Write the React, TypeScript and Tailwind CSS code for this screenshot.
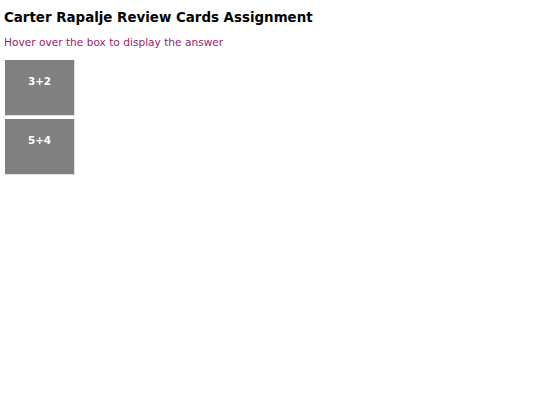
import { useState } from 'react';

const cards = [
  { question: '3+2', answer: '5' },
  { question: '5+4', answer: '9' },
];

function ReviewCard({ question, answer }: { question: string; answer: string }) {
  const [hovered, setHovered] = useState(false);
  return (
    <div
      onMouseEnter={() => setHovered(true)}
      onMouseLeave={() => setHovered(false)}
      className="w-[70px] h-[56px] bg-[#808080] border-r border-b border-[#e0e0e0] flex justify-center pt-[16px] text-white font-bold text-[10.4px] leading-[10px]"
    >
      {hovered ? answer : question}
    </div>
  );
}

export default function App() {
  return (
    <div className="min-h-screen bg-white px-[4px] pt-[10px] font-['DejaVu_Sans',Verdana,sans-serif]">
      <h1 className="text-[13.4px] font-bold text-black leading-[16px]">Carter Rapalje Review Cards Assignment</h1>
      <p className="mt-[10px] text-[10.6px] text-[#99226b] leading-[13px]">Hover over the box to display the answer</p>
      <div className="mt-[11px] ml-[1px] flex flex-col gap-[3px]">
        {cards.map((c) => (
          <ReviewCard key={c.question} question={c.question} answer={c.answer} />
        ))}
      </div>
    </div>
  );
}
